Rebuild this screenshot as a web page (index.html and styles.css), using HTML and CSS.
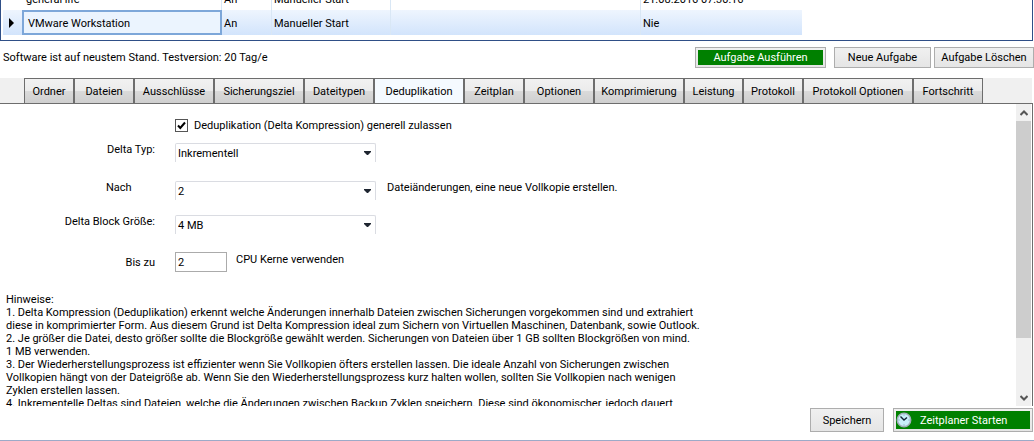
FILE: index.html
```html
<!DOCTYPE html>
<html lang="de">
<head>
<meta charset="utf-8">
<title>Backup</title>
<link rel="stylesheet" href="styles.css">
</head>
<body>
<div class="app">
  <section class="jobs">
    <table class="job-table">
      <colgroup><col class="c-mark"><col class="c-name"><col class="c-state"><col class="c-start"><col class="c-info"><col class="c-last"></colgroup>
      <tbody>
        <tr class="plain"><td></td><td>general life</td><td>An</td><td>Manueller Start</td><td></td><td>21.08.2016 07:30:16</td></tr>
        <tr class="selected"><td class="mark"><svg width="5" height="10" viewBox="0 0 5 10" aria-hidden="true"><path d="M0 0L5 5L0 10Z"/></svg></td><td class="current">VMware Workstation</td><td>An</td><td>Manueller Start</td><td></td><td>Nie</td></tr>
      </tbody>
    </table>
  </section>

  <div class="actions">
    <span class="status">Software ist auf neustem Stand. Testversion: 20 Tag/e</span>
    <button type="button" class="btn run"><span class="fill">Aufgabe Ausführen</span></button>
    <button type="button" class="btn new">Neue Aufgabe</button>
    <button type="button" class="btn delete">Aufgabe Löschen</button>
  </div>

  <nav class="tabs">
    <button type="button" class="tab w50">Ordner</button>
    <button type="button" class="tab w60">Dateien</button>
    <button type="button" class="tab w80">Ausschlüsse</button>
    <button type="button" class="tab w90">Sicherungsziel</button>
    <button type="button" class="tab w70">Dateitypen</button>
    <button type="button" class="tab w90 active">Deduplikation</button>
    <button type="button" class="tab w60">Zeitplan</button>
    <button type="button" class="tab w70">Optionen</button>
    <button type="button" class="tab w90">Komprimierung</button>
    <button type="button" class="tab w59">Leistung</button>
    <button type="button" class="tab w60">Protokoll</button>
    <button type="button" class="tab w110">Protokoll Optionen</button>
    <button type="button" class="tab w70">Fortschritt</button>
  </nav>

  <main class="panel">
    <div class="content">
      <form class="settings">
        <div class="row check-row">
          <span class="lead"></span>
          <span class="check">
            <input type="checkbox" id="dedup" checked>
            <svg width="13" height="13" viewBox="0 0 13 13" aria-hidden="true"><path d="M3 6.5L5.3 9L10 3.5"/></svg>
          </span>
          <label for="dedup">Deduplikation (Delta Kompression) generell zulassen</label>
        </div>
        <div class="row type-row">
          <label class="lead" for="type">Delta Typ:</label>
          <span class="combo"><select id="type"><option>Inkrementell</option></select><svg width="7" height="4" viewBox="0 0 7 4" aria-hidden="true"><path d="M0 0H7V1L4 4H3L0 1Z"/></svg></span>
        </div>
        <div class="row after-row">
          <label class="lead start" for="after">Nach</label>
          <span class="combo"><select id="after"><option>2</option></select><svg width="7" height="4" viewBox="0 0 7 4" aria-hidden="true"><path d="M0 0H7V1L4 4H3L0 1Z"/></svg></span>
          <span class="suffix">Dateiänderungen, eine neue Vollkopie erstellen.</span>
        </div>
        <div class="row block-row">
          <label class="lead" for="block">Delta Block Größe:</label>
          <span class="combo"><select id="block"><option>4 MB</option></select><svg width="7" height="4" viewBox="0 0 7 4" aria-hidden="true"><path d="M0 0H7V1L4 4H3L0 1Z"/></svg></span>
        </div>
        <div class="row cpu-row">
          <label class="lead" for="cpu">Bis zu</label>
          <input class="cpu" id="cpu" type="text" value="2">
          <span class="unit">CPU Kerne verwenden</span>
        </div>
      </form>
      <p class="notes">Hinweise:<br>
      1. Delta Kompression (Deduplikation) erkennt welche Änderungen innerhalb Dateien zwischen Sicherungen vorgekommen sind und extrahiert<br>
      diese in komprimierter Form. Aus diesem Grund ist Delta Kompression ideal zum Sichern von Virtuellen Maschinen, Datenbank, sowie Outlook.<br>
      2. Je größer die Datei, desto größer sollte die Blockgröße gewählt werden. Sicherungen von Dateien über 1 GB sollten Blockgrößen von mind.<br>
      1 MB verwenden.<br>
      3. Der Wiederherstellungsprozess ist effizienter wenn Sie Vollkopien öfters erstellen lassen. Die ideale Anzahl von Sicherungen zwischen<br>
      Vollkopien hängt von der Dateigröße ab. Wenn Sie den Wiederherstellungsprozess kurz halten wollen, sollten Sie Vollkopien nach wenigen<br>
      Zyklen erstellen lassen.<br>
      4. Inkrementelle Deltas sind Dateien, welche die Änderungen zwischen Backup Zyklen speichern. Diese sind ökonomischer, jedoch dauert</p>
    </div>
    <div class="scrollbar" aria-hidden="true">
      <svg class="arrow" width="8" height="6" viewBox="0 0 8 6"><path d="M0.5 5L4 1.5L7.5 5"/></svg>
      <div class="track"><div class="thumb"></div></div>
      <svg class="arrow" width="8" height="6" viewBox="0 0 8 6"><path d="M0.5 1L4 4.5L7.5 1"/></svg>
    </div>
  </main>

  <footer class="footer">
    <button type="button" class="btn save">Speichern</button>
    <button type="button" class="btn scheduler"><span class="fill">
      <svg class="clock" width="16" height="16" viewBox="0 0 16 16" aria-hidden="true"><circle cx="8" cy="8" r="6.7" fill="#c9f0fa" stroke="#a2adba" stroke-width="1.5"/><path d="M4.5 4.5L8 8L11 5.5" fill="none" stroke="#123" stroke-width="1.4"/><path d="M8 2.5V3.5M8 12.5V13.5M2.5 8H3.5M12.5 8H13.5" stroke="#6d96a8"/></svg>
      Zeitplaner Starten</span></button>
  </footer>
</div>
</body>
</html>
```
FILE: styles.css
```css
* { box-sizing: border-box; }

body {
  margin: 0;
  background: #fff;
  color: #000;
  font: 11px/13px Roboto, "Liberation Sans", Arial, sans-serif;
  white-space: nowrap;
}

button, input, select { font: inherit; color: inherit; margin: 0; border-radius: 0; }

.app {
  display: flex;
  flex-direction: column;
  height: 100vh;
  border-bottom: 1px solid #9caac8;
}

/* job list */
.jobs {
  display: flex;
  align-items: flex-end;
  flex: none;
  height: 41px;
  margin-right: 1px;
  padding: 0 2px 5px;
  overflow: hidden;
  border: solid #2f4f87;
  border-width: 0 1px 1px;
}
.job-table { table-layout: fixed; width: 799px; border-collapse: separate; border-spacing: 0; }
.c-mark { width: 19px; }
.c-name { width: 200px; }
.c-state { width: 50px; }
.c-start { width: 119px; }
.c-info { width: 250px; }
.c-last { width: 161px; }
.job-table td { height: 25px; padding: 1px 2px 0; border-right: 1px solid #d9e7f5; }
.job-table .plain td { height: 22px; }
.job-table td:first-child, .job-table td:last-child { border-right-color: transparent; }
.job-table td:nth-child(2) { padding-left: 4px; }
.selected { background: linear-gradient(#eef5fe, #d2e4fc); }
.job-table .mark { padding-left: 6px; }
.mark svg { display: block; }
.job-table .current { border: 2px solid #7da7d9; background: #ebf4fe; }

/* status line and task buttons */
.actions { display: flex; align-items: center; flex: none; height: 37px; padding: 1px 0 6px 3px; }
.status { flex: 1; }
.btn { padding: 0; border: 1px solid #adadad; background: linear-gradient(#f0f0f0, #e5e5e5); text-align: center; height: 21px; }
.fill { display: flex; align-items: center; justify-content: center; height: 100%; background: #008000; color: #fff; }
.run { width: 131px; padding: 2px; margin-right: 8px; }
.new { width: 97px; margin-right: 3px; }
.delete { width: 100px; }

/* tabs */
.tabs { display: flex; flex: none; height: 25px; margin-right: 2px; padding-left: 24px; background: #f0f0f0; }
.tab {
  padding: 0;
  border: 1px solid #6d6d6d;
  border-bottom: 0;
  background: linear-gradient(#f1f1f1 0, #ebebeb 50%, #dadada 51%, #cfcfcf 100%);
  text-align: center;
}
.tab.active { background: #f5faff; }
.w50 { width: 50px; }
.w59 { width: 59px; }
.w60 { width: 60px; }
.w70 { width: 70px; }
.w80 { width: 80px; }
.w90 { width: 90px; }
.w110 { width: 110px; }

/* settings panel */
.panel { display: flex; flex: 1; min-height: 0; margin-right: 1px; border: solid #6d6d6d; border-width: 1px 1px 0 0; }
.content { flex: 1; min-width: 0; overflow: hidden; }
.settings { display: flex; flex-direction: column; padding-top: 15px; }
.row { display: flex; align-items: flex-start; }
.lead { width: 155px; margin-right: 20px; text-align: right; }
.start { padding-left: 106px; text-align: left; }
.check { position: relative; width: 13px; height: 13px; margin-right: 6px; }
.check input { display: block; width: 13px; height: 13px; appearance: none; border: 1px solid #555; background: #fff; }
.check svg { position: absolute; inset: 0; fill: none; stroke: #000; stroke-width: 2; pointer-events: none; }
.check-row { height: 24px; }
.type-row { height: 38px; }
.after-row { height: 34px; }
.block-row { height: 37px; }
.cpu-row { height: 41px; align-items: center; padding-bottom: 21px; }
.combo { position: relative; width: 201px; height: 19px; }
.combo select {
  display: block;
  width: 100%;
  height: 100%;
  padding: 1px 2px 0;
  appearance: none;
  border: 1px solid #dadce2;
  border-bottom: 0;
  border-radius: 2px 2px 0 0;
  background: #fff;
}
.combo svg { position: absolute; right: 5px; top: 8px; fill: #1e2530; pointer-events: none; }
.suffix { margin-left: 11px; }
.cpu { width: 52px; height: 20px; padding: 0 2px; border: 1px solid #ababab; background: #fff; }
.unit { margin-left: 9px; padding-bottom: 5px; }
.notes { margin: 0; padding-left: 6px; }

.scrollbar { display: flex; flex-direction: column; align-items: center; width: 15px; margin-right: 1px; background: #f0f0f0; }
.arrow { flex: none; margin: 6px 0 5px; fill: none; stroke: #555; stroke-width: 2; }
.track { flex: 1; width: 100%; }
.thumb { height: 81%; background: #cdcdcd; }

/* bottom buttons */
.footer { display: flex; flex: none; justify-content: flex-end; gap: 9px; height: 34px; padding: 2px 1px 0 0; }
.footer .btn { height: 24px; }
.save { width: 74px; }
.footer .scheduler { width: 140px; padding: 2px; }
.scheduler .fill { justify-content: flex-start; gap: 8px; }
.clock { flex: none; }
```
